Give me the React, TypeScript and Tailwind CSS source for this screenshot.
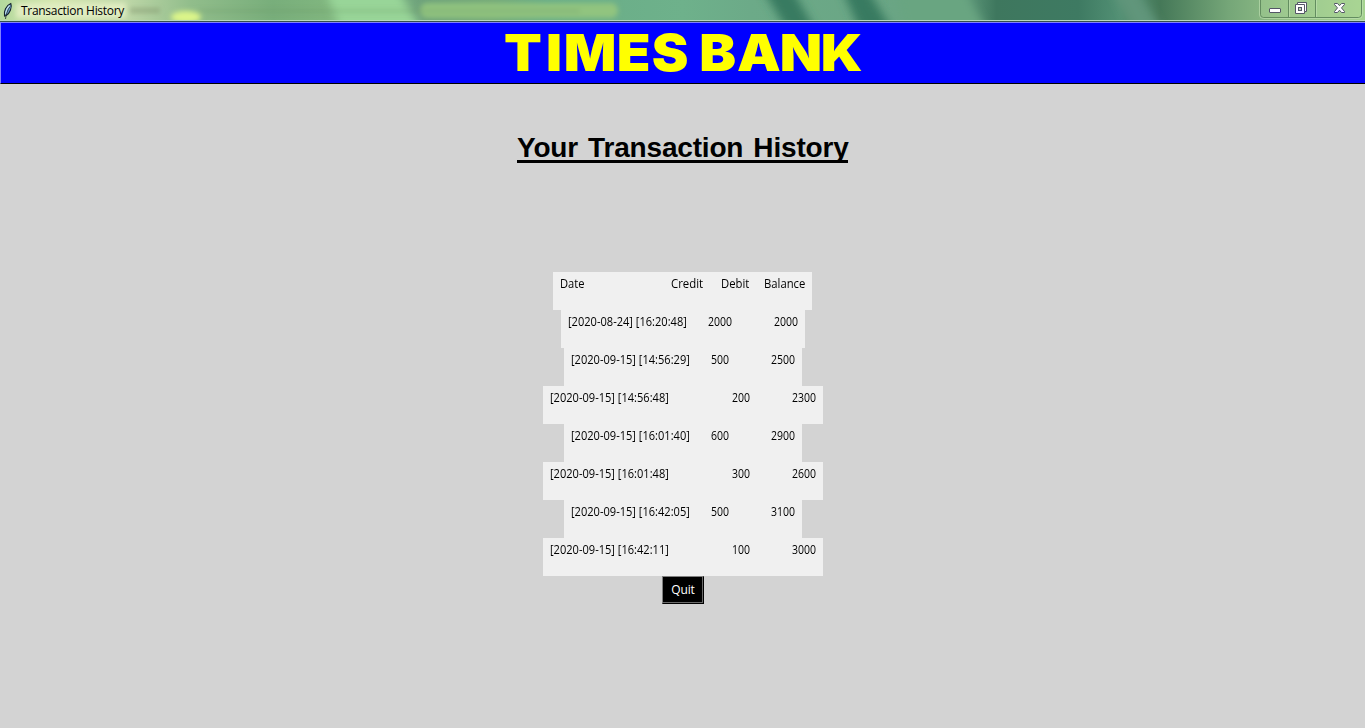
import React from "react";

type Row = { box: string; date: string; gap: string; amount: string; amountWidth: string; balance: string };

const CREDIT_BIG = { box: "w-[244px]", gap: "ml-[21px]", amountWidth: "w-[66px]" };
const CREDIT = { box: "w-[238px]", gap: "ml-[21px]", amountWidth: "w-[60px]" };
const DEBIT = { box: "w-[280px]", gap: "ml-[63px]", amountWidth: "w-[60px]" };

const rows: Row[] = [
  { ...CREDIT_BIG, date: "[2020-08-24] [16:20:48]", amount: "2000", balance: "2000" },
  { ...CREDIT, date: "[2020-09-15] [14:56:29]", amount: "500", balance: "2500" },
  { ...DEBIT, date: "[2020-09-15] [14:56:48]", amount: "200", balance: "2300" },
  { ...CREDIT, date: "[2020-09-15] [16:01:40]", amount: "600", balance: "2900" },
  { ...DEBIT, date: "[2020-09-15] [16:01:48]", amount: "300", balance: "2600" },
  { ...CREDIT, date: "[2020-09-15] [16:42:05]", amount: "500", balance: "3100" },
  { ...DEBIT, date: "[2020-09-15] [16:42:11]", amount: "100", balance: "3000" },
];

function Feather() {
  return (
    <svg width="12" height="18" viewBox="0 0 12 18" className="shrink-0">
      <path d="M2.5 14C1.600 9.500 4 3.500 8.800 1.500C10.300 5 8 11.500 4.200 13.500Z" fill="#6d9fce" stroke="#17242d" strokeWidth="1.1" />
      <path d="M7.6 3.500C4.800 6.500 3.900 9.500 3.800 12" fill="none" stroke="#c2e2ee" strokeWidth="1.3" />
      <path d="M8 4.500C5.600 8 4 12 3.500 17" fill="none" stroke="#17242d" strokeWidth=".8" />
    </svg>
  );
}

function WindowControls() {
  return (
    <svg width="106" height="20" viewBox="0 0 106 20" className="shrink-0">
      <path d="M1.5 0V14.5Q1.5 17.500 4.500 17.500H99.500Q102.500 17.500 102.500 14.500V0" fill="#b6dda0" fillOpacity=".3" stroke="#638d60" />
      <path d="M.5 0V15Q.5 18.500 4.500 18.500H99.500Q103.500 18.500 103.500 15V0" fill="none" stroke="#c3e3b6" strokeOpacity=".6" />
      <path d="M29.500 0V17M56.500 0V17" stroke="#638d60" />
      <path d="M30.500 0V17M57.500 0V17" stroke="#c3e3b6" strokeOpacity=".6" />
      <rect x="10.500" y="8.500" width="11" height="4" rx=".5" fill="#fff" stroke="#535666" />
      <path d="M38.500 2.500H47.500V11.500H45.500V13.500H36.500V4.500H38.500Z" fill="#fff" stroke="#535666" />
      <path d="M38.500 4.500H45.500V11.500" fill="none" stroke="#535666" />
      <rect x="39.500" y="7.500" width="3" height="3" fill="#bcd3b0" stroke="#535666" />
      <path d="M75.500 3.500H78.500L80.500 5.700L82.500 3.500H85.500V4.500L82.500 7.900L85.500 11.500V12.500H82.500L80.500 10.200L78.500 12.500H75.500V11.500L78.500 7.900L75.500 4.500Z" fill="#fff" stroke="#535666" />
    </svg>
  );
}

function TitleBar() {
  return (
    <header className="relative flex h-[22px] overflow-hidden border-b border-[#35514d] bg-[linear-gradient(90deg,#b4d99d_0%,#d4e5ae_4%,#c0d8a9_9%,#91bd8b_14%,#78ae7b_20%,#80b67f_24%,#82b984_27%,#6da17b_31%,#74a978_36%,#69ad87_40%,#6eb18b_50%,#6caa88_55%,#69a383_70%,#3e775e_73%,#3e7a62_79%,#529074_82%,#457858_85%,#75a678_90%,#91bf88_94%,#a4d28f_100%)]">
      <svg width="1365" height="21" className="absolute inset-0" aria-hidden="true">
        <defs>
          <filter id="soft" x="-60%" y="-100%" width="220%" height="300%"><feGaussianBlur stdDeviation="5" /></filter>
          <filter id="mist" x="-60%" y="-100%" width="220%" height="300%"><feGaussianBlur stdDeviation="2.5" /></filter>
        </defs>
        <g filter="url(#soft)">
          <path d="M324-15H395L425 35H342Z" fill="#98d598" />
          <path d="M760-15H790L818 35H790Z" fill="#397a60" />
          <path d="M840-15H865L895 35H862Z" fill="#397a60" />
          <path d="M895-15H960L990 35H905Z" fill="#69a581" />
          <path d="M1110-15H1135L1165 35H1135Z" fill="#61957a" />
        </g>
        <g filter="url(#mist)">
          <ellipse cx="186" cy="17" rx="15" ry="6" fill="#dbf589" />
          <rect x="16" y="3" width="110" height="15" fill="#e0edc1" />
          <path d="M130 8H160V13H130Z" fill="#82966f" opacity=".55" />
          <rect x="420" y="3" width="198" height="15" rx="7" fill="#91c47f" />
          <path d="M198 9H580V13H198Z" fill="#648d61" opacity=".22" />
        </g>
        <path d="M0 20.500H1365" stroke="#bad8bd" />
      </svg>
      <div className="relative flex h-[21px] w-full items-start">
        <div className="ml-[2px] pt-[2px]"><Feather /></div>
        <h2 className="ml-[7px] mt-[2px] whitespace-nowrap text-[12px] leading-[17px] tracking-[-0.3px]">Transaction History</h2>
        <div className="ml-auto flex"><WindowControls /></div>
      </div>
    </header>
  );
}

export default function App() {
  return (
    <div className="flex h-[728px] w-[1365px] flex-col overflow-hidden bg-[#d3d3d3] font-['Open_Sans','Noto_Sans',sans-serif] text-black">
      <TitleBar />
      <div className="flex h-[62px] justify-center border-t border-b border-l border-t-[#8080ff] border-b-black border-l-[#8080ff] bg-[#0000ff]">
        <svg width="380" height="60" viewBox="493 23 380 60" role="heading" aria-level={1} className="overflow-visible">
          <text x="466.600 505.500 522 571 603.500 630 647.400 682.500 722 760" y="71" transform="scale(1.08 1)" fill="#ffff00" fontFamily="Inter, sans-serif" fontSize="51" fontWeight="900" xmlSpace="preserve">TIMES BANK</text>
        </svg>
      </div>
      <main className="flex flex-col items-center">
        <h1 className="mt-[46px] h-[33px] w-[331px] whitespace-nowrap border-b-[3px] border-black font-['Liberation_Sans',Arial,sans-serif] text-[28px] font-bold leading-[35px] tracking-[-0.18px] [word-spacing:2.5px]">Your Transaction History</h1>
        <div className="mt-[109px] flex flex-col items-center text-[12px] leading-[17px]">
          <div className="flex h-[38px] w-[259px] bg-[#f0f0f0] pl-[7px] pt-[3px]">
            <span className="w-[111px] origin-left scale-x-[0.93]">Date</span>
            <span className="w-[50px] origin-left scale-x-[0.95]">Credit</span>
            <span className="w-[43px] origin-left scale-x-[0.94]">Debit</span>
            <span className="origin-left scale-x-[0.94]">Balance</span>
          </div>
          {rows.map((r) => (
            <div key={r.date} className={`flex h-[38px] whitespace-nowrap bg-[#f0f0f0] pl-[7px] pt-[3px] ${r.box}`}>
              <span className="w-[119px] origin-left scale-x-[0.922]">{r.date}</span>
              <span className={`origin-left scale-x-[0.875] ${r.gap} ${r.amountWidth}`}>{r.amount}</span>
              <span className="origin-left scale-x-[0.875]">{r.balance}</span>
            </div>
          ))}
        </div>
        <button className="flex h-[28px] w-[42px] justify-center border border-b-black border-r-black border-l-[#808080] border-t-[#808080] bg-black p-0">
          <span className="flex h-[26px] w-[40px] justify-center border-r border-b border-[#696969] pl-[2px] pt-[4px] text-[12px] leading-[17px] tracking-[-0.1px] text-white">Quit</span>
        </button>
      </main>
    </div>
  );
}
